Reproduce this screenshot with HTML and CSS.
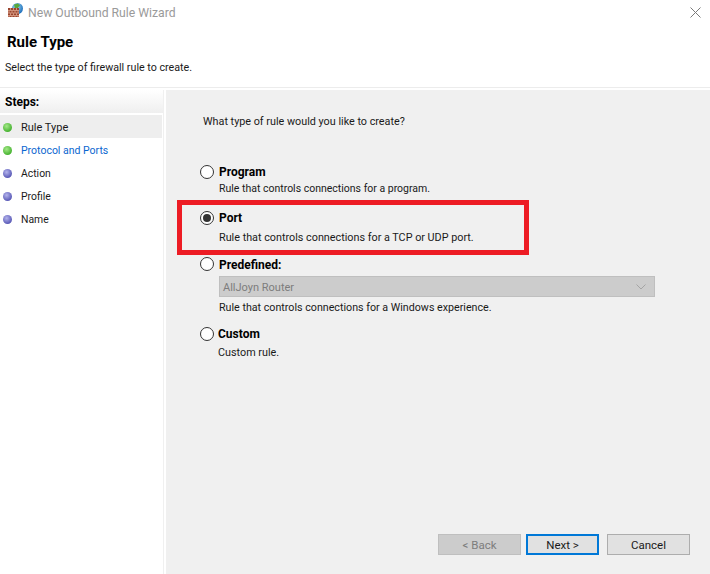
FILE: index.html
```html
<!DOCTYPE html>
<html lang="en">
<head>
<meta charset="utf-8">
<title>New Outbound Rule Wizard</title>
<link rel="stylesheet" href="styles.css">
</head>
<body>
<div class="window">
  <div class="titlebar">
    <svg class="app-icon" width="17" height="18" viewBox="0 0 17 18">
      <defs>
        <radialGradient id="globe" cx="40%" cy="35%" r="70%"><stop offset="0" stop-color="#9fdcf5"/><stop offset="1" stop-color="#1668b8"/></radialGradient>
      </defs>
      <circle cx="10.5" cy="5.5" r="5.5" fill="url(#globe)"/>
      <path d="M7 1.500l4-1 2 2-2 2 1 3-2 1-2-3z" fill="#5aa93a"/>
      <rect x="1" y="5" width="11" height="9" fill="#9a4630"/>
      <path d="M1 7.500h11M1 10h11M1 12.500h11M3.500 5v2.500M6.500 5v2.500M9.500 5v2.500M2 7.500V10M5 7.500V10M8 7.500V10M11 7.500V10M3.500 10v2.500M6.500 10v2.500M9.500 10v2.500M2 12.500V14M5 12.500V14M8 12.500V14M11 12.500V14" stroke="#d2937c" stroke-width="1" fill="none"/>
    </svg>
    <span class="title">New Outbound Rule Wizard</span>
    <svg class="close" width="11" height="11" viewBox="0 0 11 11"><path d="M.5.500l10 10M10.500.500l-10 10" stroke="#7a7a7a" fill="none"/></svg>
  </div>
  <header class="head">
    <h1 class="head-title">Rule Type</h1>
    <p class="head-sub">Select the type of firewall rule to create.</p>
  </header>
  <div class="body">
    <nav class="steps">
      <div class="steps-head">Steps:</div>
      <ul class="step-list">
        <li class="step step-current"><span class="dot dot-green"></span>Rule Type</li>
        <li class="step step-link"><span class="dot dot-green"></span>Protocol and Ports</li>
        <li class="step step-action"><span class="dot dot-blue"></span>Action</li>
        <li class="step step-action"><span class="dot dot-blue"></span>Profile</li>
        <li class="step step-action"><span class="dot dot-blue"></span>Name</li>
      </ul>
    </nav>
    <main class="content">
      <p class="question">What type of rule would you like to create?</p>
      <div class="options">
        <div class="option opt-program">
          <span class="radio"></span>
          <div class="opt-text">
            <div class="opt-label">Program</div>
            <div class="opt-desc opt-desc-program">Rule that controls connections for a program.</div>
          </div>
        </div>
        <div class="option opt-port">
          <span class="radio radio-on"></span>
          <div class="opt-text">
            <div class="opt-label">Port</div>
            <div class="opt-desc opt-desc-port">Rule that controls connections for a TCP or UDP port.</div>
          </div>
        </div>
        <div class="option opt-predefined">
          <span class="radio"></span>
          <div class="opt-text">
            <div class="opt-label">Predefined:</div>
            <div class="combo">
              <span class="combo-text">AllJoyn Router</span>
              <svg width="10" height="6" viewBox="0 0 10 6"><path d="M.5.500L5 5 9.500.500" stroke="#a4a4a4" fill="none"/></svg>
            </div>
            <div class="opt-desc">Rule that controls connections for a Windows experience.</div>
          </div>
        </div>
        <div class="option opt-custom">
          <span class="radio"></span>
          <div class="opt-text opt-text-custom">
            <div class="opt-label">Custom</div>
            <div class="opt-desc opt-desc-custom">Custom rule.</div>
          </div>
        </div>
      </div>
      <div class="buttons">
        <div class="btn btn-disabled">&lt; Back</div>
        <div class="btn btn-default">Next &gt;</div>
        <div class="btn btn-cancel">Cancel</div>
      </div>
      <div class="highlight"></div>
    </main>
  </div>
</div>
</body>
</html>
```
FILE: styles.css
```css
* { box-sizing: border-box; }
html, body { margin: 0; padding: 0; }
body {
  width: 710px;
  height: 574px;
  overflow: hidden;
  background: #fff;
  font-family: Roboto, "Noto Sans", sans-serif;
  font-size: 11px;
  line-height: 16px;
  color: #1a1a1a;
}
.window { display: flex; flex-direction: column; height: 574px; }
.titlebar {
  height: 24px;
  flex: none;
  display: flex;
  align-items: center;
  padding: 0 9px 0 7px;
}
.app-icon { flex: none; margin-right: 4px; }
.title { color: #9a9a9a; flex: 1; font-size: 12.2px; padding-top: 2px; }
.head { height: 64px; flex: none; padding: 9px 5px 0; border-bottom: 1px solid #ececec; }
.head-title { margin: 0 0 0 2px; font-size: 15px; font-weight: 700; line-height: 18px; color: #000; }
.head-sub { margin: 9px 0 0; font-size: 10.7px; }
.body { flex: 1; display: flex; padding-top: 2px; }
.steps { width: 164px; flex: none; border-right: 1px solid #f0f0f0; }
.steps-head {
  height: 23px;
  padding: 4px 5px 0;
  font-size: 12px;
  font-weight: 700;
  color: #000;
  background: linear-gradient(#ffffff, #efefef);
}
.step-list { list-style: none; margin: 2px 1px 0 0; padding: 0; font-size: 11px; }
.step { height: 23px; display: flex; align-items: center; padding: 2px 0 0 3px; }
.step-current { background: #eeeeee; }
.step-link { color: #0b66d0; font-size: 10.5px; }
.step-action { font-size: 10.4px; }
.dot { width: 9px; height: 9px; border-radius: 50%; margin-right: 9px; flex: none; }
.dot-green { background: radial-gradient(circle at 40% 35%, #a4e888, #42b02c 75%); }
.dot-blue { background: radial-gradient(circle at 40% 35%, #b4b4ec, #5555b4 75%); }
.content {
  position: relative;
  margin-left: 2px;
  flex: 1;
  background: #f0f0f0;
  padding: 24px 0 0 37px;
  display: flex;
  flex-direction: column;
}
.question { margin: 0; font-size: 10.8px; }
.options { margin-top: 34px; display: flex; flex-direction: column; }
.option { display: flex; align-items: flex-start; margin-left: -3px; }
.radio {
  width: 14px;
  height: 14px;
  flex: none;
  margin-top: 1px;
  margin-right: 5px;
  border-radius: 50%;
  border: 1px solid #333;
  background: #fff;
  display: flex;
  align-items: center;
  justify-content: center;
}
.radio-on::after { content: ""; width: 8px; height: 8px; border-radius: 50%; background: #333; }
.opt-label { font-size: 12px; font-weight: 700; color: #000; }
.opt-desc { font-size: 10.8px; }
.opt-desc-program { font-size: 10.5px; padding-top: 1px; }
.opt-program, .opt-port { height: 46px; }
.opt-desc-port { margin-top: 4px; }
.opt-predefined { height: 69px; margin-top: 1px; }
.opt-predefined .radio { margin-top: 0; }
.combo {
  width: 436px;
  height: 21px;
  margin-top: 3px;
  padding: 0 8px 0 3px;
  background: #cccccc;
  border: 1px solid #bfbfbf;
  color: #7d7d7d;
  display: flex;
  align-items: center;
  justify-content: space-between;
}
.combo-text { padding-top: 2px; }
.opt-predefined .opt-desc { margin-top: 3px; font-size: 10.7px; }
.opt-text-custom { margin-left: -1px; }
.opt-desc-custom { margin-top: 3px; }
.buttons { margin-top: auto; margin-bottom: 19px; margin-left: 235px; display: flex; font-size: 11.5px; }
.btn {
  width: 83px;
  height: 21px;
  display: flex;
  align-items: center;
  justify-content: center;
  background: #e1e1e1;
  border: 1px solid #adadad;
}
.btn-disabled { background: #cccccc; border-color: #bfbfbf; color: #7d7d7d; margin-right: 5px; }
.btn-default { width: 73px; border: 2px solid #0078d7; margin-right: 8px; }
.highlight {
  position: absolute;
  left: 11px;
  top: 110px;
  width: 352px;
  height: 55px;
  border: 5px solid #ed1c24;
}
```
